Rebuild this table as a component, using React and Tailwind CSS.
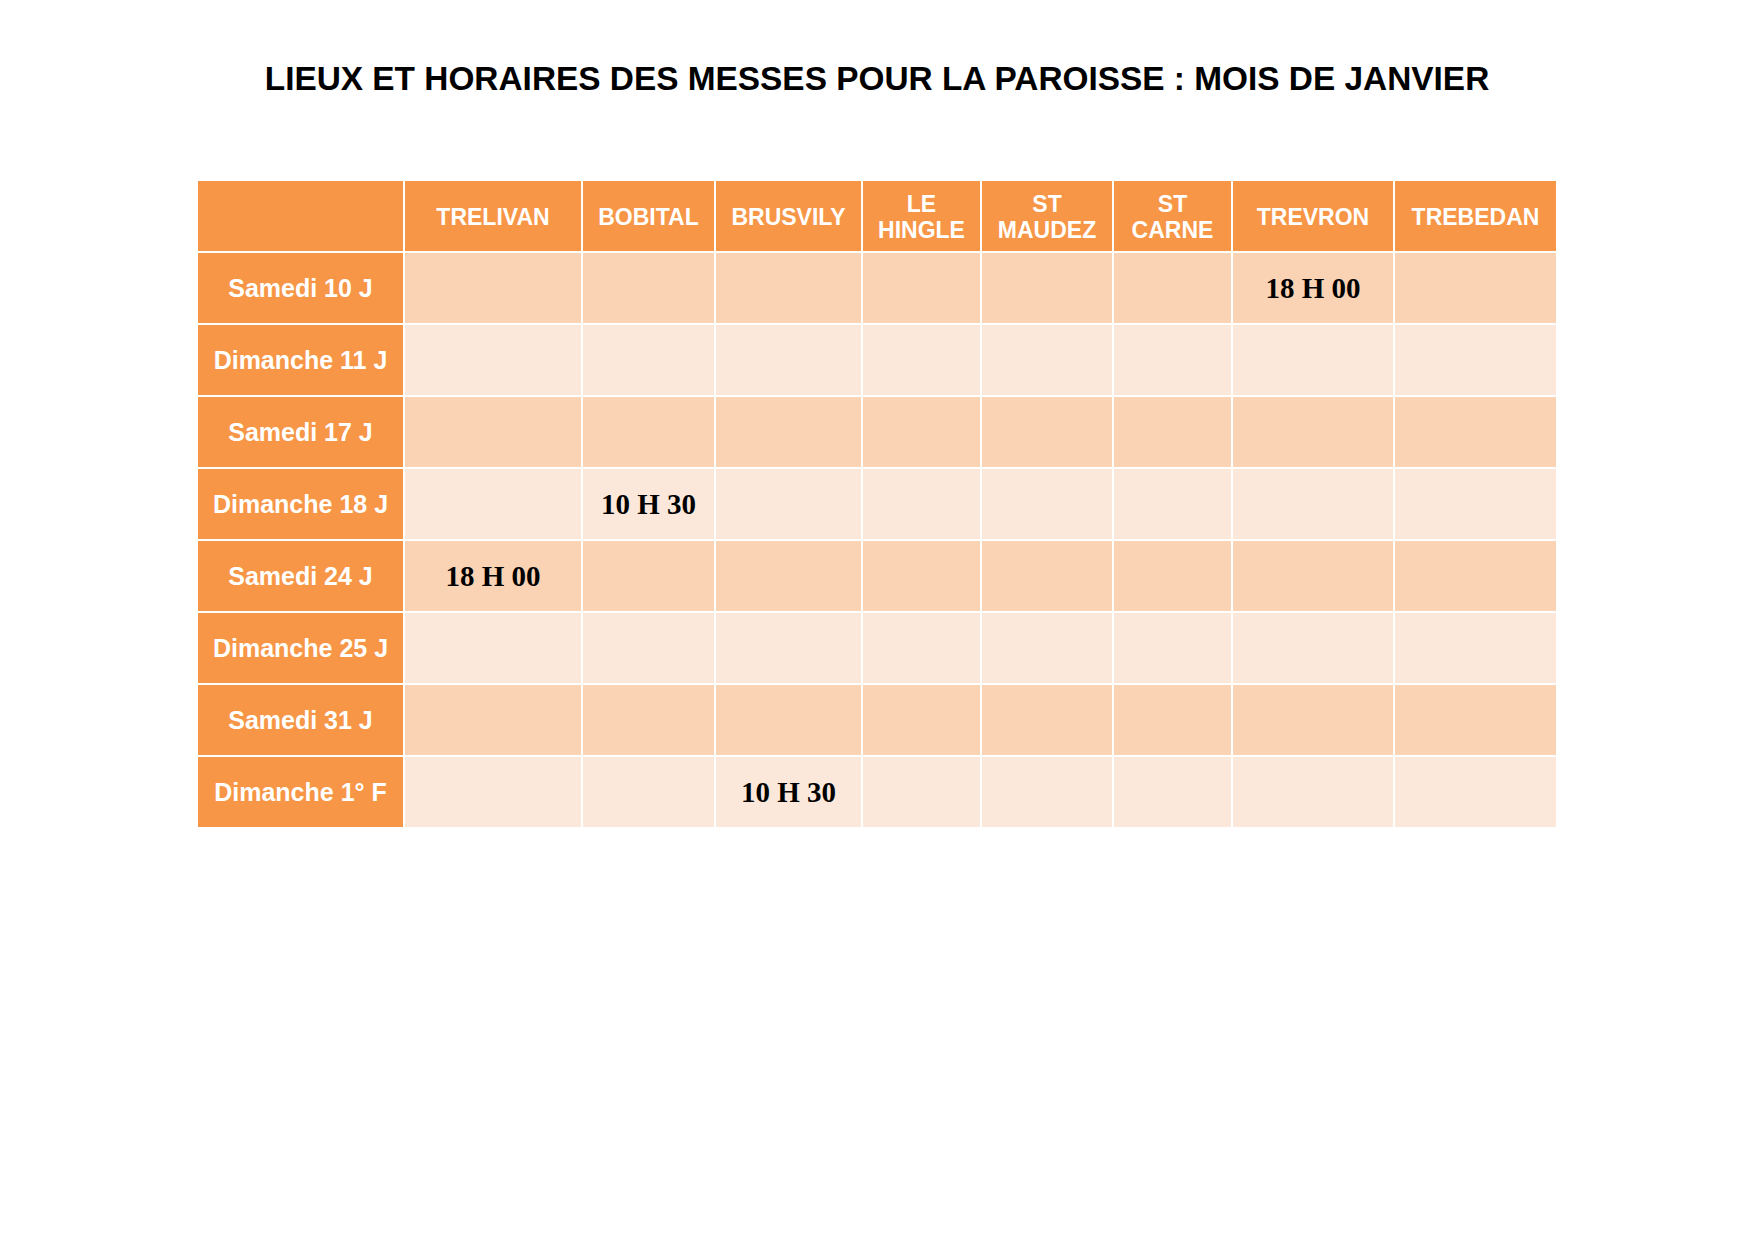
const places = ['TRELIVAN', 'BOBITAL', 'BRUSVILY', 'LE HINGLE', 'ST MAUDEZ', 'ST CARNE', 'TREVRON', 'TREBEDAN'];

const rows = [
  { label: 'Samedi 10 J', times: { TREVRON: '18 H 00' } },
  { label: 'Dimanche 11 J', times: {} },
  { label: 'Samedi 17 J', times: {} },
  { label: 'Dimanche 18 J', times: { BOBITAL: '10 H 30' } },
  { label: 'Samedi 24 J', times: { TRELIVAN: '18 H 00' } },
  { label: 'Dimanche 25 J', times: {} },
  { label: 'Samedi 31 J', times: {} },
  { label: 'Dimanche 1° F', times: { BRUSVILY: '10 H 30' } },
];

// two-word places are wrapped on two lines in the header
const twoLines = ['LE HINGLE', 'ST MAUDEZ', 'ST CARNE'];

const headerCell =
  'flex items-center justify-center bg-[#F79646] pt-[2px] text-center text-[23px] font-bold leading-[26px] text-white';

const App = () => {
  return (
    <div className="min-h-screen bg-white font-['Liberation_Sans',Arial,sans-serif]">
      <h1 className="pt-[60px] text-center text-[33.4px] font-bold leading-[38px] text-black">
        LIEUX ET HORAIRES DES MESSES POUR LA PAROISSE : MOIS DE JANVIER
      </h1>

      <div className="mt-[83px] flex justify-center">
        <div className="grid grid-cols-[205px_176px_131px_145px_117px_130px_117px_160px_161px] auto-rows-[70px] gap-[2px] bg-white">
          <div className="bg-[#F79646]" />
          {places.map((place) => (
            <div key={place} className={headerCell}>
              {twoLines.includes(place) ? (
                <span>
                  {place.split(' ')[0]}
                  <br />
                  {place.split(' ')[1]}
                </span>
              ) : (
                place
              )}
            </div>
          ))}

          {rows.map((row, i) => {
            const cellBg = i % 2 === 0 ? 'bg-[#FAD3B4]' : 'bg-[#FCE8DA]';
            return [
              <div
                key={row.label}
                className="flex items-center justify-center bg-[#F79646] pt-[2px] text-[25px] font-bold text-white"
              >
                {row.label}
              </div>,
              ...places.map((place) => (
                <div
                  key={row.label + place}
                  className={`flex items-center justify-center ${cellBg} pt-[2px] font-['Liberation_Serif','Times_New_Roman',serif] text-[29px] font-bold text-black`}
                >
                  {row.times[place] || ''}
                </div>
              )),
            ];
          })}
        </div>
      </div>
    </div>
  );
};

export default App;
